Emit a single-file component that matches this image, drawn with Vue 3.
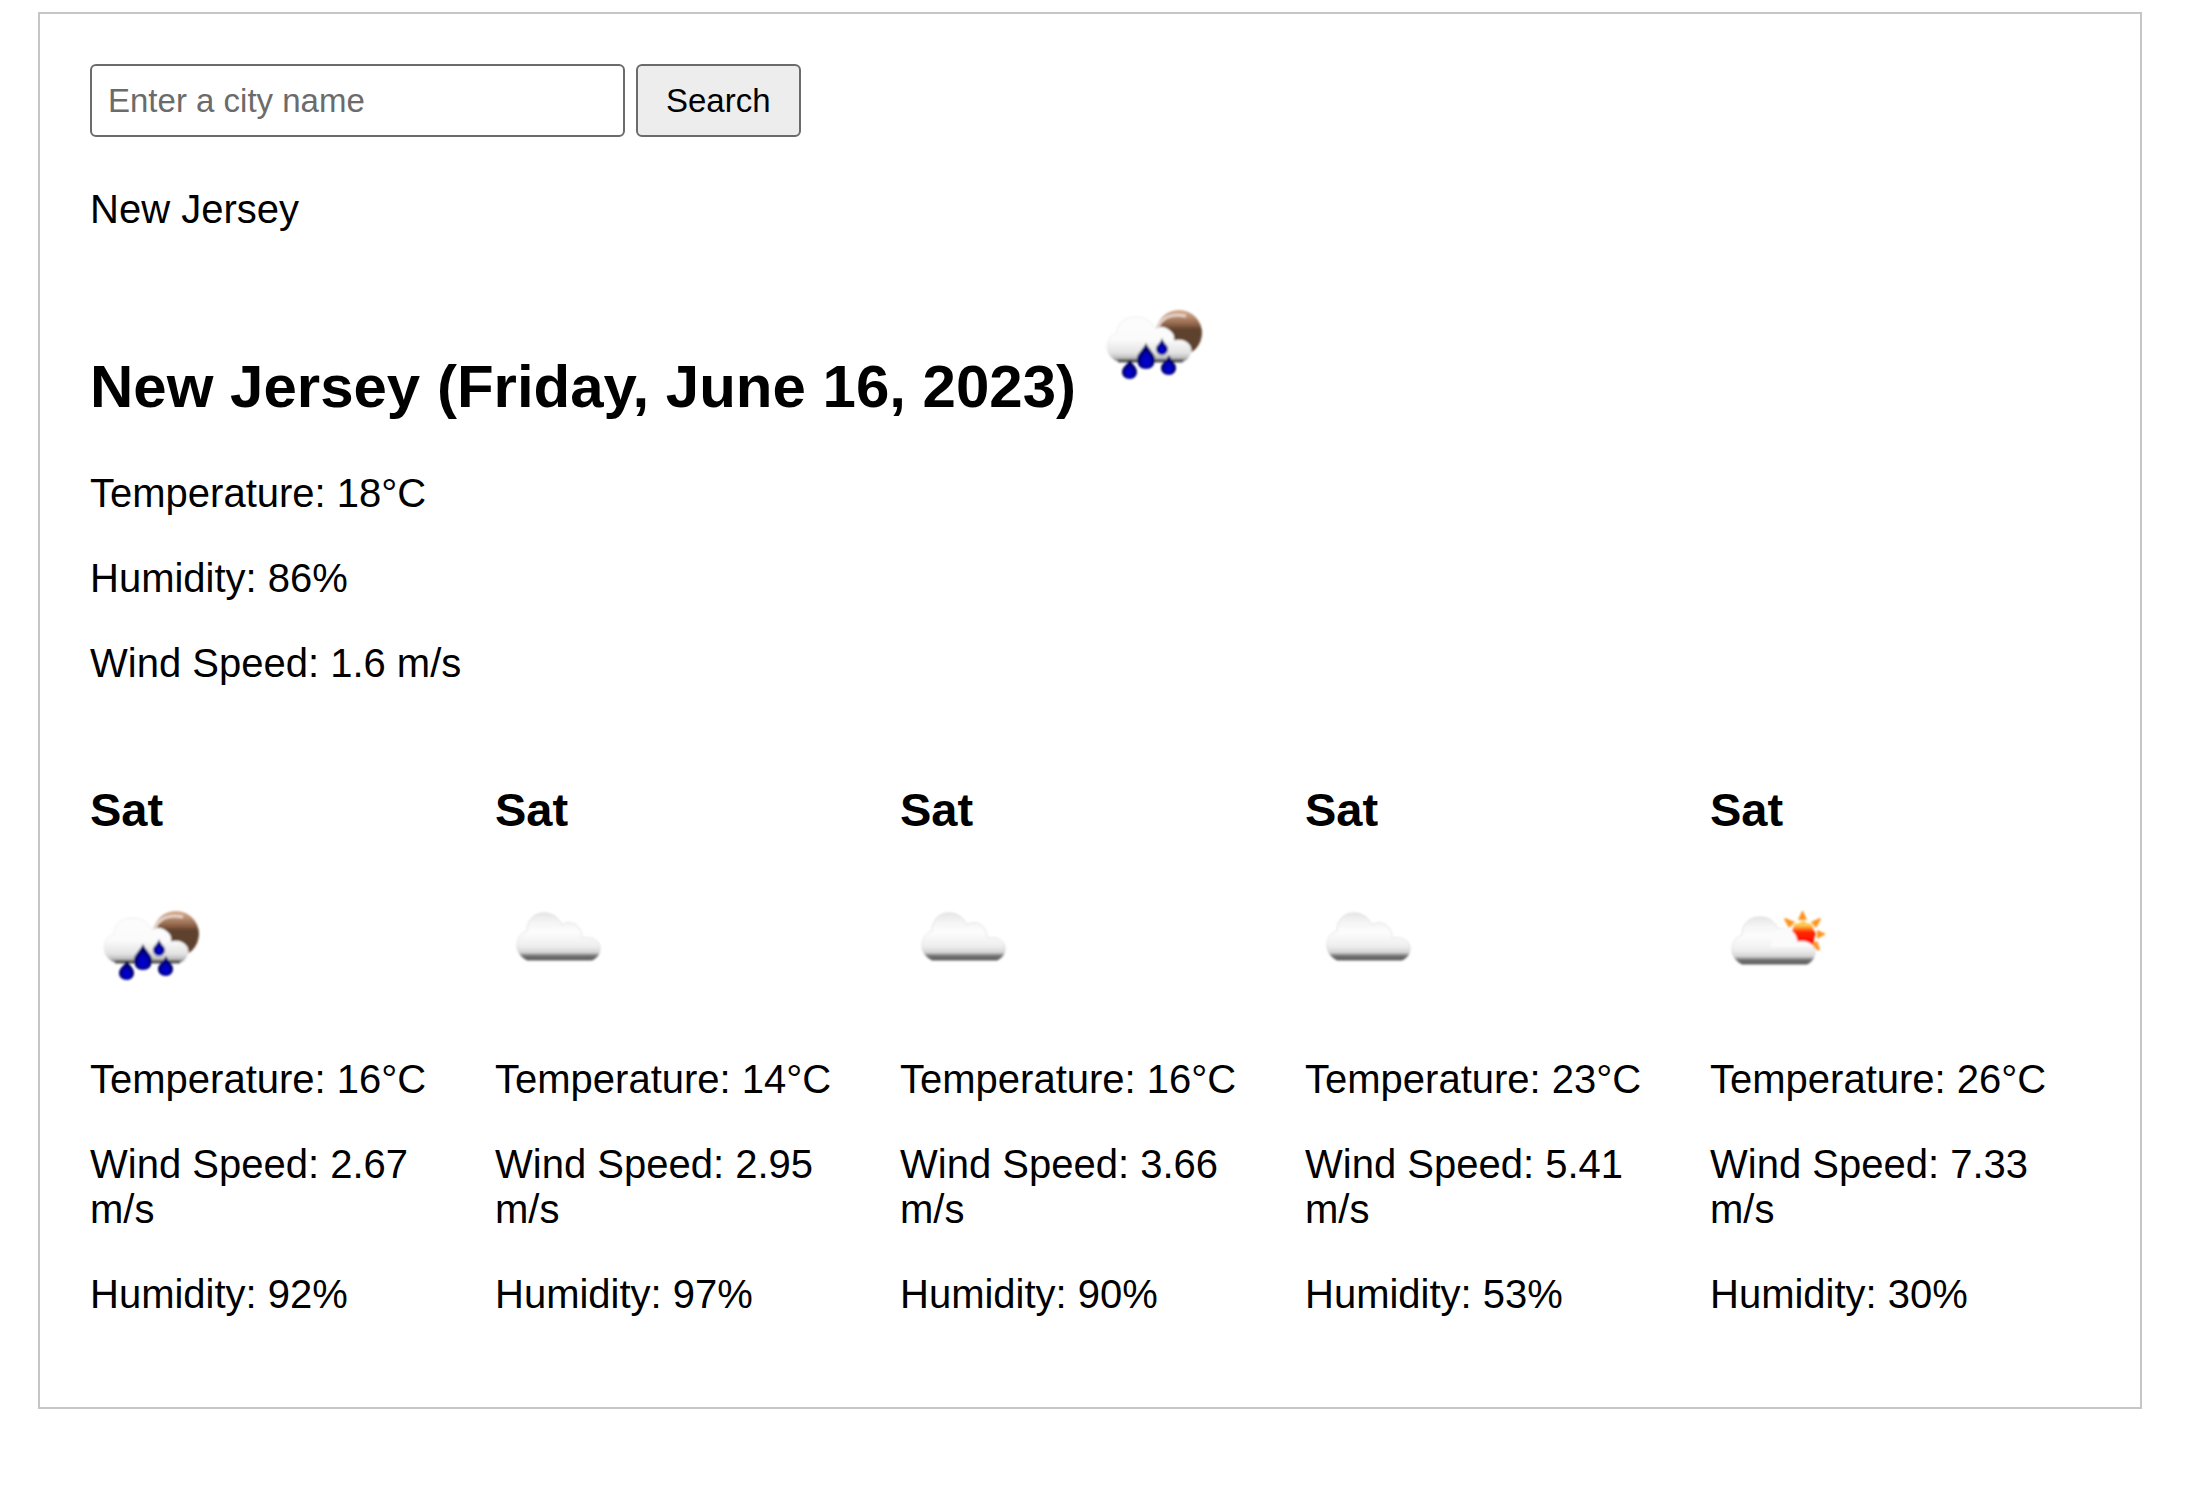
<script setup>
import { ref } from 'vue'

const query = ref('')
const current = {
  city: 'New Jersey',
  date: 'Friday, June 16, 2023',
  icon: 'rain-night',
  temperature: 18,
  humidity: 86,
  wind: 1.6,
}
const forecast = [
  { day: 'Sat', icon: 'rain-night', label: 'Rain', temperature: 16, wind: 2.67, humidity: 92 },
  { day: 'Sat', icon: 'cloud', label: 'Cloudy', temperature: 14, wind: 2.95, humidity: 97 },
  { day: 'Sat', icon: 'cloud', label: 'Cloudy', temperature: 16, wind: 3.66, humidity: 90 },
  { day: 'Sat', icon: 'cloud', label: 'Cloudy', temperature: 23, wind: 5.41, humidity: 53 },
  { day: 'Sat', icon: 'sun-cloud', label: 'Partly cloudy', temperature: 26, wind: 7.33, humidity: 30 },
]
</script>

<template>
  <!-- shared weather symbols -->
  <svg class="sprite" aria-hidden="true">
    <defs>
      <linearGradient id="cloud-fill" x1="0" y1="0" x2="0" y2="1">
        <stop offset="0" stop-color="#e6e6e6" />
        <stop offset="0.2" stop-color="#f5f5f5" />
        <stop offset="0.4" stop-color="#fdfdfd" />
        <stop offset="0.7" stop-color="#efefef" />
        <stop offset="0.84" stop-color="#d4d4d4" />
        <stop offset="0.9" stop-color="#7c7c7c" />
        <stop offset="1" stop-color="#525252" />
      </linearGradient>
      <linearGradient id="cloud-edge" x1="0" y1="0" x2="0" y2="1">
        <stop offset="0" stop-color="#dadada" />
        <stop offset="0.6" stop-color="#e6e6e6" />
        <stop offset="0.84" stop-color="#d0d0d0" />
        <stop offset="0.92" stop-color="#7c7c7c" />
        <stop offset="1" stop-color="#666666" />
      </linearGradient>
      <linearGradient id="rain-cloud-fill" x1="0" y1="0" x2="0" y2="1">
        <stop offset="0" stop-color="#fdfdfd" />
        <stop offset="0.5" stop-color="#fbfbfb" />
        <stop offset="0.8" stop-color="#e2e2e2" />
        <stop offset="0.91" stop-color="#bdbdbd" />
        <stop offset="1" stop-color="#444444" />
      </linearGradient>
      <linearGradient id="moon-fill" x1="0" y1="0" x2="0" y2="1">
        <stop offset="0" stop-color="#d8a888" />
        <stop offset="0.15" stop-color="#b98f74" />
        <stop offset="0.3" stop-color="#93664a" />
        <stop offset="0.42" stop-color="#5f422e" />
        <stop offset="0.85" stop-color="#5f422e" />
        <stop offset="1" stop-color="#7a583e" />
      </linearGradient>
      <linearGradient id="sun-fill" x1="0" y1="0" x2="0" y2="1">
        <stop offset="0" stop-color="#ffb52e" />
        <stop offset="0.16" stop-color="#ffd060" />
        <stop offset="0.3" stop-color="#ff8a1c" />
        <stop offset="0.45" stop-color="#ff2a05" />
        <stop offset="1" stop-color="#ff0000" />
      </linearGradient>
      <radialGradient id="drop-fill" cx="0.5" cy="0.68" r="0.5">
        <stop offset="0" stop-color="#0000e0" />
        <stop offset="0.45" stop-color="#0000b4" />
        <stop offset="1" stop-color="#000055" />
      </radialGradient>
      <filter id="soft" x="-10%" y="-10%" width="120%" height="120%">
        <feGaussianBlur stdDeviation="0.9" />
      </filter>
    </defs>

    <symbol id="cloud" viewBox="0 0 125 125">
      <path
        filter="url(#soft)"
        fill="url(#cloud-fill)"
        stroke="url(#cloud-edge)"
        stroke-width="1"
        d="M32 77C26 74 22 69 22 62C22 55 26 50 32 48C32 37 39 30 49 30C57 30 63 34 67 42C71 39 77 39 81 42C85 45 87 49 87 55C96 53 105 57 105 65C105 71 102 75 97 77Z"
      />
    </symbol>

    <symbol id="rain-night" viewBox="0 0 125 125">
      <g filter="url(#soft)">
        <circle cx="86" cy="51" r="23" fill="url(#moon-fill)" />
        <path d="M65 45C69 35 79 31 93 34" fill="none" stroke="#e6d3c8" stroke-width="3" />
        <path
          fill="url(#rain-cloud-fill)"
          stroke="#ededed"
          stroke-width="1"
          d="M25 80C18 77 14 72 14 65C14 58 18 53 24 51C24 41 32 35 42 35C52 35 59 39 62 47C67 44 73 45 77 49C80 51 81 54 81 59C89 56 98 61 98 68C98 74 95 78 90 80Z"
        />
        <path d="M25 79H90" stroke="#555555" stroke-width="3" />
        <g fill="url(#drop-fill)">
          <path d="M53 61C56 68 62 71 62 77C62 84 58 87 53 87C48 87 44 84 44 77C44 71 50 68 53 61Z" />
          <path d="M69 56C70 61 75 63 75 67C75 70 72 73 69 73C66 73 63 70 63 67C63 63 68 61 69 56Z" />
          <path d="M37 77C39 82 44 85 44 90C44 94 41 97 37 97C32 97 29 94 29 90C29 85 35 82 37 77Z" />
          <path d="M76 73C78 78 83 81 83 86C83 90 80 93 76 93C71 93 68 90 68 86C68 81 74 78 76 73Z" />
        </g>
      </g>
    </symbol>

    <symbol id="sun-cloud" viewBox="0 0 125 125">
      <g filter="url(#soft)">
        <g fill="#ff921a">
          <path d="M88 37L92 28L93 28L97 37Z" />
          <path d="M101 39L110 35L111 36L106 45Z" />
          <path d="M107 47L116 51L107 56Z" />
          <path d="M101 61L107 58L110 66L108 68Z" />
          <path d="M74 36L75 35L85 39L79 45Z" />
        </g>
        <path d="M93 38L97 40L102 41L103 46L106 51L104 55V60L99 62H84L82 56L80 51L83 46L84 41L89 40Z" fill="url(#sun-fill)" />
        <path
          fill="url(#cloud-fill)"
          stroke="url(#cloud-edge)"
          stroke-width="1"
          d="M32 81C26 78 22 73 22 66C22 59 26 54 32 52C32 41 39 34 50 34C59 34 65 39 68 46H76C82 47 86 51 87 59C95 57 105 61 105 69C105 74 102 79 97 81Z"
        />
        <path fill="#fbfbfb" d="M66 47C75 44 84 46 86 54L88 60C94 57 100 59 103 64H60Z" />
      </g>
    </symbol>
  </svg>

  <main class="weather">
    <form class="search" @submit.prevent>
      <input v-model="query" class="city-input" type="text" placeholder="Enter a city name" aria-label="City name" />
      <button class="search-button" type="submit">Search</button>
    </form>

    <p>{{ current.city }}</p>

    <section>
      <h2>
        {{ current.city }} ({{ current.date }})
        <svg class="icon" role="img" aria-label="Rain"><use :href="'#' + current.icon" /></svg>
      </h2>
      <p>Temperature: {{ current.temperature }}°C</p>
      <p>Humidity: {{ current.humidity }}%</p>
      <p>Wind Speed: {{ current.wind }} m/s</p>
    </section>

    <section class="forecast">
      <article v-for="(item, index) in forecast" :key="index">
        <h3>{{ item.day }}</h3>
        <svg class="icon" role="img" :aria-label="item.label"><use :href="'#' + item.icon" /></svg>
        <p>Temperature: {{ item.temperature }}°C</p>
        <p>Wind Speed: {{ item.wind }} m/s</p>
        <p>Humidity: {{ item.humidity }}%</p>
      </article>
    </section>
  </main>
</template>

<style>
body {
  margin: 0;
  background: #fff;
}
</style>

<style scoped>
.sprite {
  position: absolute;
  width: 0;
  height: 0;
}

.weather {
  box-sizing: border-box;
  margin: 12px 64px 64px 38px;
  padding: 50px;
  border: 2px solid #c6c6c6;
  color: #000;
  font-family: Arial, "Liberation Sans", sans-serif;
  font-size: 40px;
  line-height: 45px;
}

.search {
  display: flex;
  gap: 11px;
  margin-bottom: 50px;
}

.city-input,
.search-button {
  box-sizing: border-box;
  height: 73px;
  border: 2px solid #6b6b6b;
  border-radius: 6px;
  font-family: inherit;
  font-size: 33px;
}

.city-input {
  width: 535px;
  padding: 0 16px;
  background: #fff;
}

.city-input::placeholder {
  color: #6b6b6b;
  opacity: 1;
}

.search-button {
  padding: 0 28px;
  background: #ededed;
  color: #000;
}

p {
  margin: 40px 0;
}

h2 {
  margin: 50px 0;
  font-size: 60px;
  line-height: 69px;
}

h3 {
  margin: 0 0 47px;
  font-size: 47px;
  line-height: 53px;
}

.icon {
  width: 125px;
  height: 125px;
}

.forecast {
  display: grid;
  grid-template-columns: repeat(5, 1fr);
  gap: 25px;
  margin-top: 97px;
}
</style>
